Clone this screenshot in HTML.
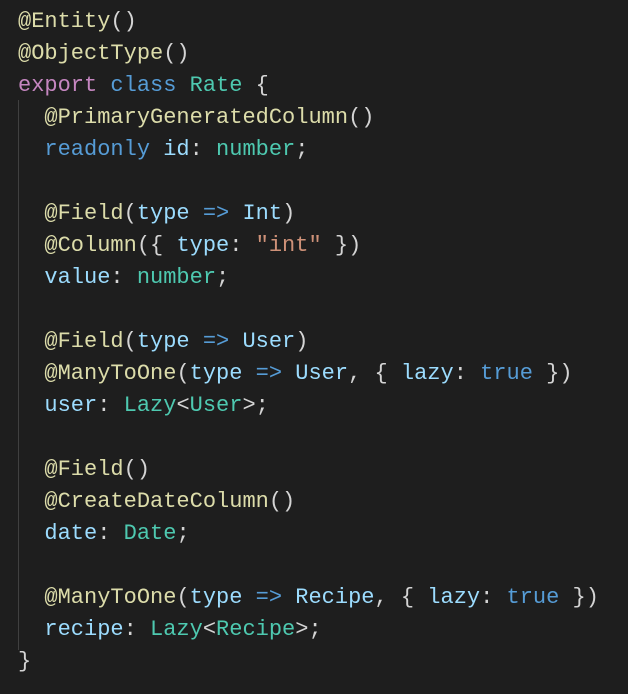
<!DOCTYPE html><html><head><style>
body{margin:0;background:#1e1e1e;width:628px;height:694px;overflow:hidden;position:relative}
pre{margin:0;position:absolute;left:18px;top:6px;font:22px/32px "Liberation Mono",monospace;color:#d4d4d4}
.g{position:absolute;left:18px;top:100px;width:1px;height:550px;background:#404040}
.d{color:#dcdcaa}.k{color:#c586c0}.b{color:#569cd6}.t{color:#4ec9b0}.v{color:#9cdcfe}.s{color:#ce9178}
</style></head><body><div class="g"></div><pre><span class="d">@Entity</span>()
<span class="d">@ObjectType</span>()
<span class="k">export</span> <span class="b">class</span> <span class="t">Rate</span> {
  <span class="d">@PrimaryGeneratedColumn</span>()
  <span class="b">readonly</span> <span class="v">id</span>: <span class="t">number</span>;

  <span class="d">@Field</span>(<span class="v">type</span> <span class="b">=&gt;</span> <span class="v">Int</span>)
  <span class="d">@Column</span>({ <span class="v">type</span>: <span class="s">"int"</span> })
  <span class="v">value</span>: <span class="t">number</span>;

  <span class="d">@Field</span>(<span class="v">type</span> <span class="b">=&gt;</span> <span class="v">User</span>)
  <span class="d">@ManyToOne</span>(<span class="v">type</span> <span class="b">=&gt;</span> <span class="v">User</span>, { <span class="v">lazy</span>: <span class="b">true</span> })
  <span class="v">user</span>: <span class="t">Lazy</span>&lt;<span class="t">User</span>&gt;;

  <span class="d">@Field</span>()
  <span class="d">@CreateDateColumn</span>()
  <span class="v">date</span>: <span class="t">Date</span>;

  <span class="d">@ManyToOne</span>(<span class="v">type</span> <span class="b">=&gt;</span> <span class="v">Recipe</span>, { <span class="v">lazy</span>: <span class="b">true</span> })
  <span class="v">recipe</span>: <span class="t">Lazy</span>&lt;<span class="t">Recipe</span>&gt;;
}</pre></body></html>
